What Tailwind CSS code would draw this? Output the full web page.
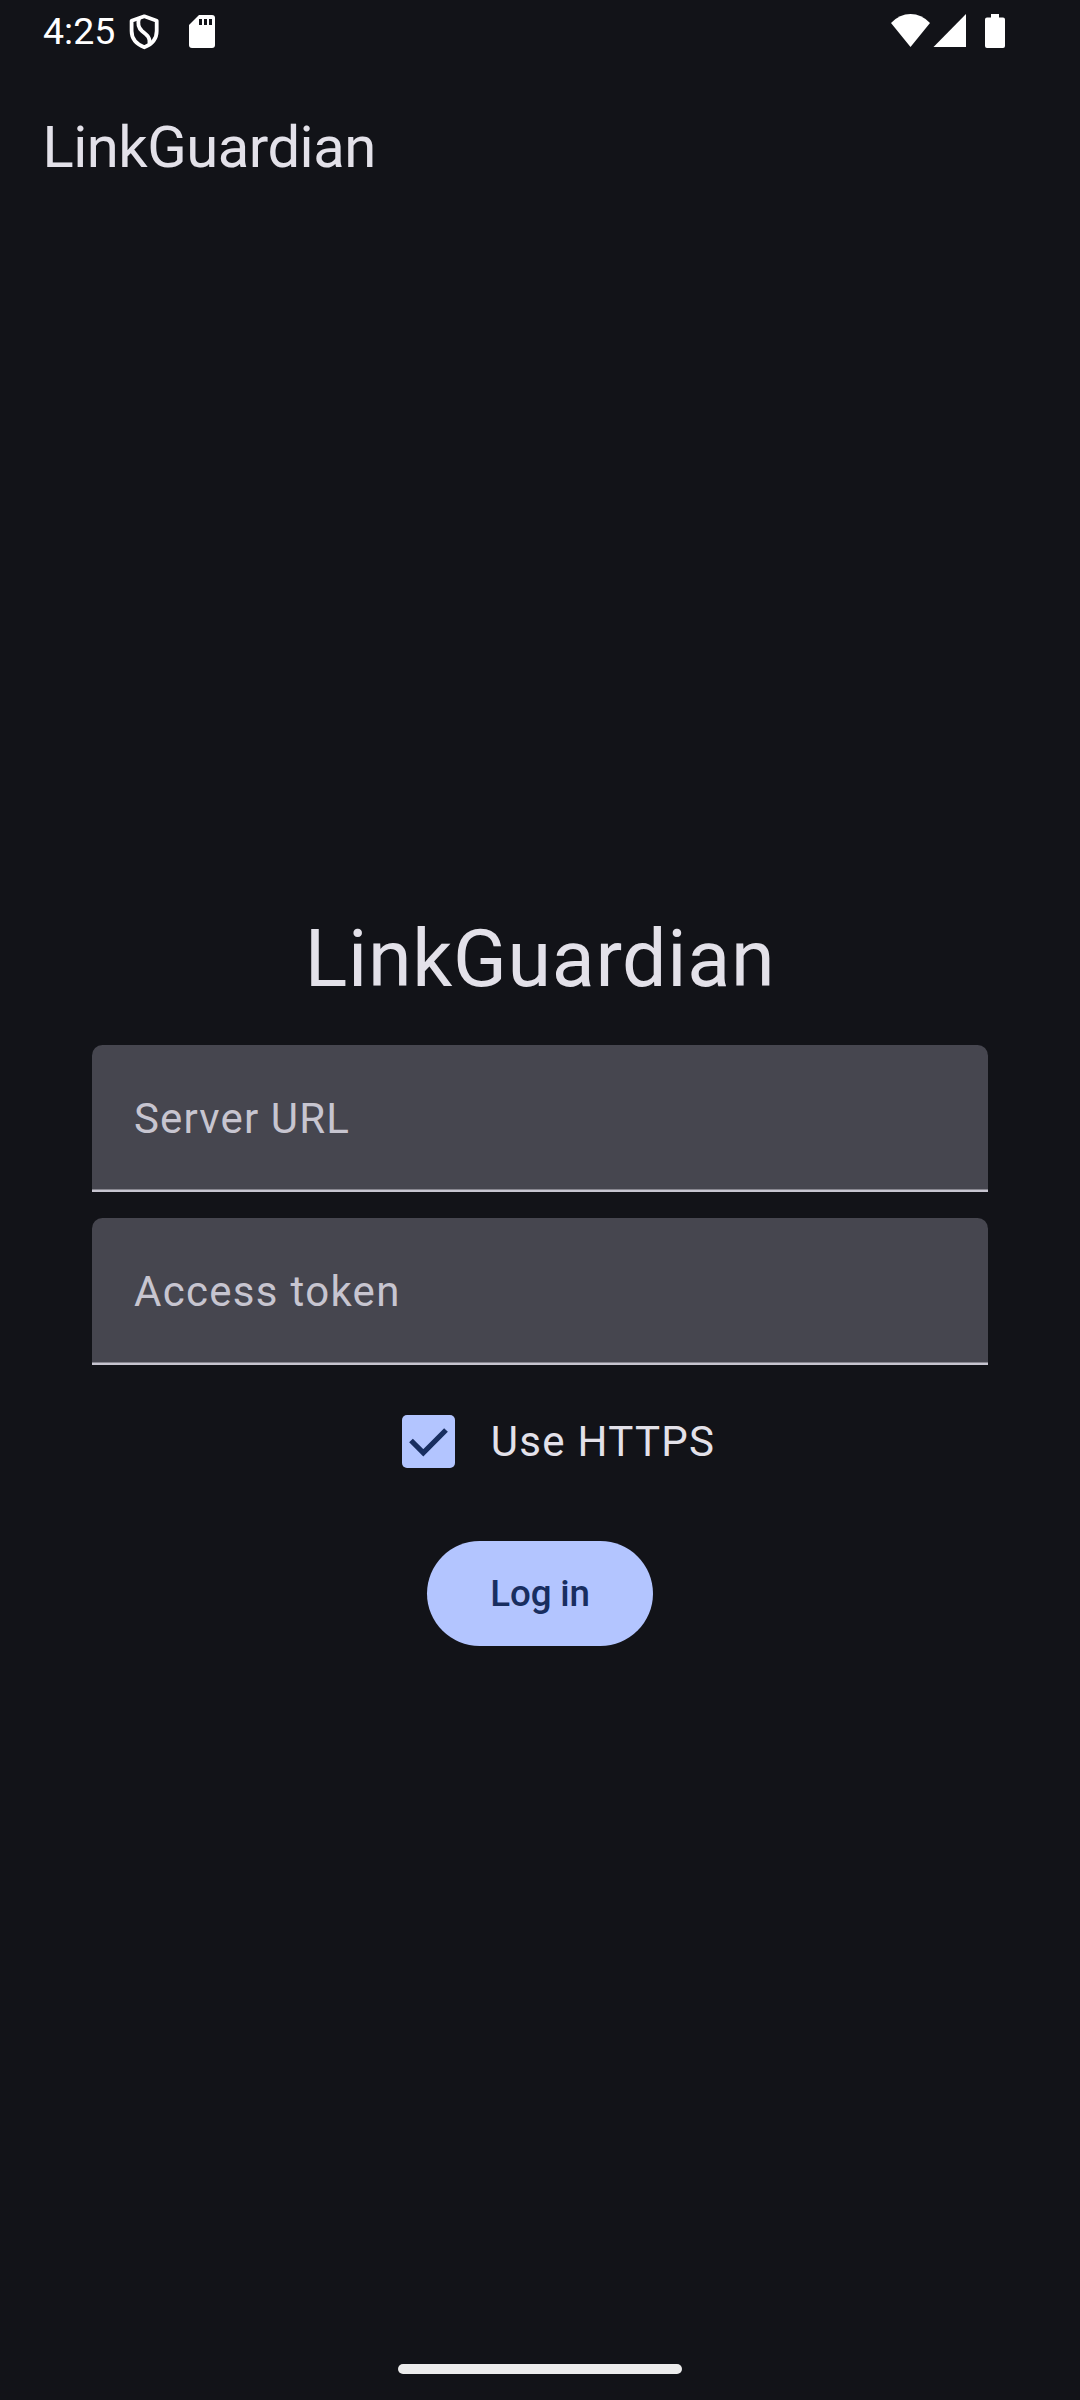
<!DOCTYPE html>
<html lang="en">
<head>
<meta charset="utf-8">
<title>LinkGuardian</title>
<script src="https://cdn.jsdelivr.net/npm/@tailwindcss/browser@4"></script>
</head>
<body class="bg-[#121318]">
<div class="flex h-[2400px] w-[1080px] flex-col overflow-hidden bg-[#121318] font-['Roboto',sans-serif] text-[#e3e1e9]">
  <!-- Status bar -->
  <div class="flex h-[63px] shrink-0 items-center justify-between pl-[43px] pr-[75px] text-white">
    <div class="flex items-center">
      <span class="w-[86px] text-[37.5px] leading-[63px] whitespace-nowrap">4:25</span>
      <svg class="h-[36px] w-[30px]" viewBox="0 0 30 36" fill="none" stroke="#fff" stroke-width="3.8" stroke-linejoin="round"><path d="M15.3 2.300 27.700 6.800V17c0 7.500-4.700 13.200-12.400 16.300C7.500 30.200 2.600 24.500 2.600 17V6.800Z"/><path d="M10 4.500C8.500 9.500 9 13.500 13 17c5 4 8.500 6.500 7.500 13"/></svg>
      <svg class="ml-[30px] h-[33px] w-[26px]" viewBox="0 0 26 33"><path fill="#fff" d="M10 0H23a3 3 0 0 1 3 3V30a3 3 0 0 1-3 3H3a3 3 0 0 1-3-3V10Z"/><path fill="#121318" d="M10 4h3v6h-3zM15 4h3v6h-3zM20 4h3v6h-3z"/></svg>
    </div>
    <div class="flex items-center pb-px">
      <svg class="h-[34px] w-[40px]" viewBox="0 0 40 34"><path fill="#fff" d="M20.500 33 1 9Q9.500 0 20.500 0T40 9Z"/></svg>
      <svg class="ml-[3px] h-[34px] w-[33px]" viewBox="0 0 33 34"><path fill="#fff" d="M33 0V33H.5Z"/></svg>
      <svg class="ml-[19px] h-[34px] w-[20px]" viewBox="0 0 20 34"><path fill="#fff" d="M6 0h8v3.500h4a2 2 0 0 1 2 2V32a2 2 0 0 1-2 2H2a2 2 0 0 1-2-2V5.500a2 2 0 0 1 2-2h4Z"/></svg>
    </div>
  </div>
  <!-- App bar -->
  <header class="flex h-[168px] shrink-0 items-center pl-[42.500px]">
    <h1 class="text-[58px] leading-[74px] tracking-[-0.5px]">LinkGuardian</h1>
  </header>
  <!-- Login form -->
  <main class="flex flex-1 flex-col items-center px-[92px] pt-[675px]">
    <h2 class="text-[79px] leading-[106px] tracking-[0.7px]">LinkGuardian</h2>
    <div class="mt-[33px] flex h-[147px] w-full items-center rounded-t-[10.5px] bg-[#46464f] pl-[42px] text-[42px] leading-[63px] tracking-[1.15px] text-[#c7c5d0] shadow-[inset_0_-2.625px_0_#c7c5d0]">Server URL</div>
    <div class="mt-[26px] flex h-[147px] w-full items-center rounded-t-[10.5px] bg-[#46464f] pl-[42px] text-[42px] leading-[63px] tracking-[1.3px] text-[#c7c5d0] shadow-[inset_0_-2.625px_0_#c7c5d0]">Access token</div>
    <label class="mt-[13px] flex h-[126px] items-center pl-[37px]">
      <svg class="size-[53px]" viewBox="0 0 53 53"><rect width="53" height="53" rx="5" fill="#b3c5ff"/><path d="M9 25.500 21.300 37.800 44 15" fill="none" stroke="#182e60" stroke-width="5.250"/></svg>
      <span class="ml-[36px] text-[42px] leading-[63px] tracking-[1.3px]">Use HTTPS</span>
    </label>
    <button class="mt-[37px] flex h-[105px] w-[226px] items-center justify-center rounded-full bg-[#b3c5ff] text-[36.75px] leading-[52px] font-medium tracking-[-0.2px] text-[#182e60]">Log in</button>
  </main>
  <!-- Gesture bar -->
  <div class="flex h-[63px] shrink-0 items-start justify-center pt-[27px]">
    <div class="h-[10px] w-[284px] rounded-full bg-[#ececec]"></div>
  </div>
</div>
</body>
</html>
